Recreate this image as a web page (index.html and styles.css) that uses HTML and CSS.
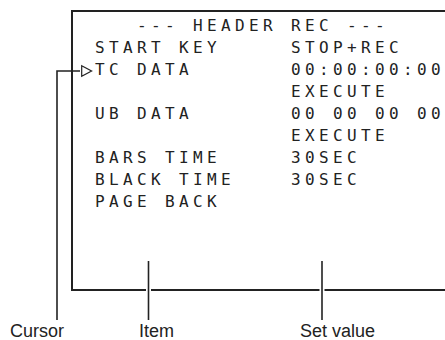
FILE: index.html
```html
<!DOCTYPE html>
<html lang="en">
  <head>
    <meta charset="UTF-8" />
    <meta name="viewport" content="width=device-width, initial-scale=1.0" />
    <title>HEADER REC menu</title>

    <link rel="stylesheet" href="styles.css">
  </head>
  <body>
    <div id="page">
      <div class="screen">
        <div class="menu">
          <div class="title">--- HEADER REC ---</div>

          <div class="cur"></div>
          <div class="item">START KEY</div>
          <div class="value">STOP+REC</div>

          <div class="cur">
            <svg width="14" height="22" viewBox="0 0 14 22">
              <polygon points="0.7,6.8 10.6,12 0.7,17.2" fill="none" stroke="#222" stroke-width="1.2" stroke-linejoin="miter" />
            </svg>
          </div>
          <div class="item">TC DATA</div>
          <div class="value">00:00:00:00</div>

          <div class="cur"></div>
          <div class="item"></div>
          <div class="value">EXECUTE</div>

          <div class="cur"></div>
          <div class="item">UB DATA</div>
          <div class="value">00 00 00 00</div>

          <div class="cur"></div>
          <div class="item"></div>
          <div class="value">EXECUTE</div>

          <div class="cur"></div>
          <div class="item">BARS TIME</div>
          <div class="value">30SEC</div>

          <div class="cur"></div>
          <div class="item">BLACK TIME</div>
          <div class="value">30SEC</div>

          <div class="cur"></div>
          <div class="item">PAGE BACK</div>
          <div class="value"></div>
        </div>
      </div>

      <div class="labels">
        <span>Cursor</span>
        <span>Item</span>
        <span>Set value</span>
      </div>

      <!-- callout lines drawn over the screen -->
      <svg class="leaders" width="445" height="340" viewBox="0 0 445 340">
        <path d="M80 71 H57 V320" fill="none" stroke="#222" stroke-width="1.6" />
        <line x1="148.5" y1="286" x2="148.5" y2="295" stroke="#fff" stroke-width="5" />
        <line x1="148.5" y1="261" x2="148.5" y2="320" stroke="#222" stroke-width="1.6" />
        <line x1="322" y1="286" x2="322" y2="295" stroke="#fff" stroke-width="5" />
        <line x1="322" y1="261" x2="322" y2="320" stroke="#222" stroke-width="1.6" />
      </svg>
    </div>
  </body>
</html>
```

FILE: styles.css
```css
body {
  margin: 0;
  background: #fff;
}

#page {
  position: relative;
  width: 445px;
  height: 340px;
  overflow: hidden;
  padding-top: 10px;
  box-sizing: border-box;
}

.screen {
  margin-left: 71px;
  width: 374px;
  height: 281px;
  box-sizing: border-box;
  border: 2px solid #222;
  border-right: none;
  padding: 3px 0 0 8px;
}

.menu {
  display: grid;
  grid-template-columns: 14px 196px 1fr;
  grid-auto-rows: 22px;
  font-family: "DejaVu Sans Mono", "Liberation Mono", monospace;
  font-size: 16px;
  line-height: 22px;
  letter-spacing: 4.37px;
  color: #222;
}

.title {
  grid-column: 2 / -1;
  padding-left: 42px;
}

.cur svg {
  display: block;
}

.labels {
  display: grid;
  grid-template-columns: 129px 161px auto;
  margin-top: 30px;
  padding-left: 10px;
  font-family: "Liberation Sans", Arial, sans-serif;
  font-size: 18px;
  line-height: 20px;
  color: #222;
}

.leaders {
  position: absolute;
  top: 0;
  left: 0;
  pointer-events: none;
}
```
